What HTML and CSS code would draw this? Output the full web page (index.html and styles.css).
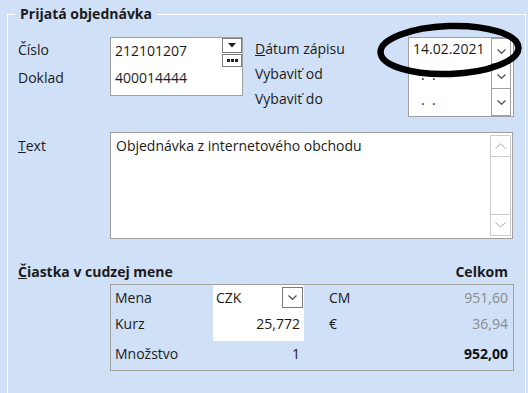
FILE: index.html
```html
<!DOCTYPE html>
<html lang="sk">
<head>
  <meta charset="UTF-8">
  <title>Prijatá objednávka</title>
  <link rel="stylesheet" href="styles.css">
</head>
<body>

  <fieldset class="group">
    <legend>Prijatá objednávka</legend>

    <div class="head">
      <div class="left-labels">
        <div>Číslo</div>
        <div>Doklad</div>
      </div>

      <div class="num-box">
        <div class="num-values">
          <div>212101207</div>
          <div>400014444</div>
        </div>
        <div class="num-btns">
          <span class="btn btn-drop">
            <svg width="8" height="5" viewBox="0 0 8 5"><path d="M0 0 H8 L4 4.5 Z" fill="#222"/></svg>
          </span>
          <span class="btn btn-more">
            <svg width="11" height="3" viewBox="0 0 11 3"><rect x="0" y="0" width="3" height="3" fill="#222"/><rect x="4" y="0" width="3" height="3" fill="#222"/><rect x="8" y="0" width="3" height="3" fill="#222"/></svg>
          </span>
        </div>
      </div>

      <div class="date-labels">
        <div><u>D</u>átum zápisu</div>
        <div>Vybaviť od</div>
        <div>Vybaviť do</div>
      </div>

      <div class="date-box">
        <div class="date-row row-a">
          <span class="date-text">14.02.2021</span>
          <span class="drop">
            <svg width="9" height="5" viewBox="0 0 9 5"><path d="M0.5 0.5 L4.5 4.3 L8.5 0.5" fill="none" stroke="#555" stroke-width="1.3"/></svg>
          </span>
        </div>
        <div class="date-row row-b">
          <span class="date-text dots">.&nbsp;&nbsp;.</span>
          <span class="drop">
            <svg width="9" height="5" viewBox="0 0 9 5"><path d="M0.5 0.5 L4.5 4.3 L8.5 0.5" fill="none" stroke="#555" stroke-width="1.3"/></svg>
          </span>
        </div>
        <div class="date-row row-c">
          <span class="date-text dots">.&nbsp;&nbsp;.</span>
          <span class="drop">
            <svg width="9" height="5" viewBox="0 0 9 5"><path d="M0.5 0.5 L4.5 4.3 L8.5 0.5" fill="none" stroke="#555" stroke-width="1.3"/></svg>
          </span>
        </div>
      </div>
    </div>

    <div class="text-row">
      <div class="text-label"><u>T</u>ext</div>
      <div class="memo">
        <div class="memo-text">Objednávka z internetového obchodu</div>
        <div class="scroll">
          <span class="scroll-btn up">
            <svg width="11" height="6" viewBox="0 0 11 6"><path d="M0.5 5.5 L5.5 0.8 L10.5 5.5" fill="none" stroke="#a8a8a8" stroke-width="1"/></svg>
          </span>
          <span class="scroll-btn down">
            <svg width="11" height="6" viewBox="0 0 11 6"><path d="M0.5 0.5 L5.5 5.2 L10.5 0.5" fill="none" stroke="#a8a8a8" stroke-width="1"/></svg>
          </span>
        </div>
      </div>
    </div>

    <div class="amount-head">
      <span><u>Č</u>iastka v cudzej mene</span>
      <span>Celkom</span>
    </div>

    <div class="panel">
      <div class="cell lbl">Mena</div>
      <div class="cell field combo">
        <span>CZK</span>
        <span class="combo-btn">
          <svg width="9" height="5" viewBox="0 0 9 5"><path d="M0.5 0.5 L4.5 4.3 L8.5 0.5" fill="none" stroke="#555" stroke-width="1.3"/></svg>
        </span>
      </div>
      <div class="cell cur">CM</div>
      <div class="cell val muted">951,60</div>

      <div class="cell lbl">Kurz</div>
      <div class="cell field num">25,772</div>
      <div class="cell cur">€</div>
      <div class="cell val muted">36,94</div>

      <div class="cell lbl">Množstvo</div>
      <div class="cell num">1</div>
      <div class="cell cur"></div>
      <div class="cell val total">952,00</div>
    </div>
  </fieldset>

  <svg class="mark" width="528" height="393" viewBox="0 0 528 393">
    <ellipse cx="449.5" cy="50" rx="69" ry="24" transform="rotate(-2 449.5 50)" fill="none" stroke="#000" stroke-width="6.5"/>
  </svg>

</body>
</html>
```

FILE: styles.css
```css
body {
  margin: 0;
  background: #cfe0f7;
  font-family: 'Open Sans', 'Noto Sans', sans-serif;
  font-size: 14px;
  color: #1b1b1b;
  overflow: hidden;
  height: 393px;
}

.group {
  box-sizing: border-box;
  height: 388px;
  margin: 5px 3px 0 7px;
  padding: 13px 11px 0 10px;
  border: 1px solid #ffffff;
  border-bottom: none;
}

.group legend {
  margin-left: -3px;
  padding: 0 5px;
  font-weight: bold;
  line-height: 18px;
}

/* top block */
.head {
  display: flex;
  align-items: flex-start;
}

.left-labels {
  width: 92px;
  line-height: 28px;
}

.num-box {
  width: 133px;
  height: 59px;
  box-sizing: border-box;
  margin-top: 1px;
  border: 1px solid #a0a0a0;
  background: #ffffff;
  display: flex;
}

.num-values {
  flex: 1;
  padding-left: 4px;
  margin-top: -1px;
  line-height: 27px;
}

.num-btns {
  display: flex;
  flex-direction: column;
  gap: 1px;
}

.btn {
  width: 20px;
  box-sizing: border-box;
  border: 1px solid #7a7a7a;
  background: #ffffff;
  display: flex;
  align-items: center;
  justify-content: center;
}

.btn-drop {
  height: 15px;
}

.btn-more {
  height: 13px;
}

.date-labels {
  width: 153px;
  margin-left: 12px;
  line-height: 25px;
}

.date-box {
  width: 106px;
  height: 80px;
  box-sizing: border-box;
  margin-top: 1px;
  border: 1px solid #a0a0a0;
  background: #ffffff;
}

.date-row {
  display: flex;
  justify-content: space-between;
  line-height: 22px;
}

.row-a { height: 26px; }
.row-b { height: 25px; }
.row-c { height: 27px; }

.date-text {
  padding-left: 4px;
}

.dots {
  padding-left: 12px;
}

.drop {
  width: 20px;
  box-sizing: border-box;
  margin-right: 2px;
  border: 1px solid #a0a0a0;
  border-top: none;
  display: flex;
  align-items: center;
  justify-content: center;
}

.row-a .drop {
  border-top: 1px solid #a0a0a0;
}

/* text block */
.text-row {
  display: flex;
  margin-top: 15px;
}

.text-label {
  width: 92px;
  padding-top: 3px;
  line-height: 22px;
}

.memo {
  width: 403px;
  height: 107px;
  box-sizing: border-box;
  border: 1px solid #a0a0a0;
  background: #ffffff;
  display: flex;
}

.memo-text {
  flex: 1;
  padding: 2px 5px;
  line-height: 22px;
}

.scroll {
  width: 21px;
  box-sizing: border-box;
  margin: 2px 1px 2px 0;
  border: 1px solid #cdcdcd;
  display: flex;
  flex-direction: column;
  justify-content: space-between;
}

.scroll-btn {
  height: 20px;
  display: flex;
  align-items: center;
  justify-content: center;
}

.scroll-btn.up {
  border-bottom: 1px solid #cdcdcd;
}

.scroll-btn.down {
  border-top: 1px solid #cdcdcd;
}

/* amount block */
.amount-head {
  display: flex;
  justify-content: space-between;
  margin-top: 22px;
  padding-right: 6px;
  font-weight: bold;
  line-height: 22px;
}

.panel {
  margin: 1px 0 0 92px;
  height: 87px;
  box-sizing: border-box;
  border: 1px solid #a0a0a0;
  padding-right: 5px;
  display: grid;
  grid-template-columns: 102px 91px 1fr 1fr;
  grid-template-rows: 26px 30px 26px;
}

.cell {
  line-height: 25px;
}

.panel .cell:nth-child(-n+4),
.panel .cell:nth-child(n+9) {
  line-height: 26px;
}

.lbl {
  padding-left: 4px;
}

.field {
  background: #ffffff;
}

.combo {
  display: flex;
  justify-content: space-between;
  align-items: flex-start;
  padding-left: 3px;
}

.combo-btn {
  width: 21px;
  height: 21px;
  box-sizing: border-box;
  margin: 2px 1px 0 0;
  border: 1px solid #7a7a7a;
  display: flex;
  align-items: center;
  justify-content: center;
}

.num {
  text-align: right;
  padding-right: 4px;
}

.cur {
  padding-left: 25px;
}

.val {
  text-align: right;
}

.muted {
  color: #8a8a8a;
}

.total {
  font-weight: bold;
  color: #111111;
}

.mark {
  position: absolute;
  left: 0;
  top: 0;
  pointer-events: none;
}
```
